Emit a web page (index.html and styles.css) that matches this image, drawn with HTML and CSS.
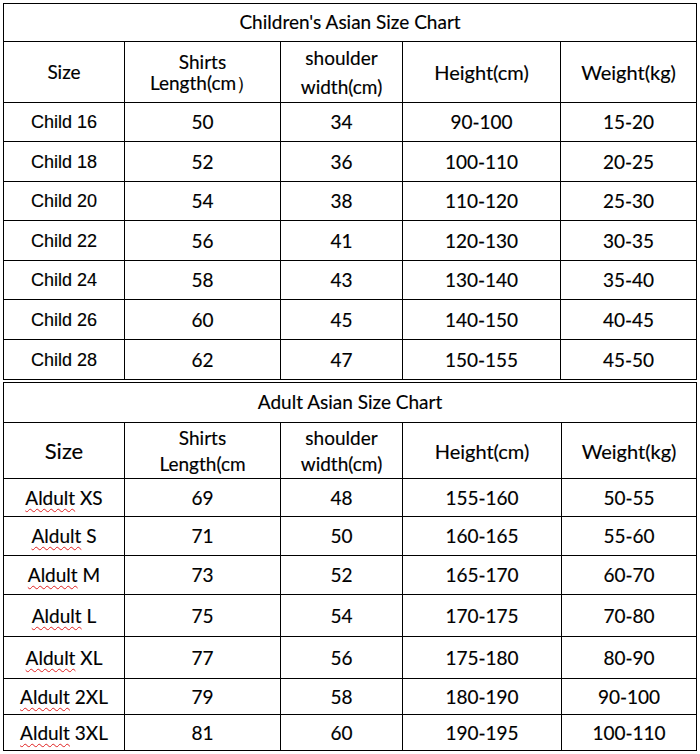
FILE: index.html
```html
<!DOCTYPE html>
<html lang="en">
<head>
<meta charset="utf-8">
<title>Asian Size Chart</title>
<link rel="stylesheet" href="styles.css">
</head>
<body>
<div class="page">
  <table class="chart kids">
    <colgroup>
      <col class="c1"><col class="c2"><col class="c3"><col class="c4"><col class="c5">
    </colgroup>
    <tr class="r-title"><td colspan="5" class="title">Children's Asian Size Chart</td></tr>
    <tr class="r-head">
      <td class="size-h">Size</td>
      <td class="two l21">Shirts<br>Length(cm）</td>
      <td class="two l29">shoulder<br>width(cm)</td>
      <td class="head">Height(cm)</td>
      <td class="head">Weight(kg)</td>
    </tr>
    <tr class="r-a"><td class="child">Child 16</td><td>50</td><td>34</td><td>90-100</td><td>15-20</td></tr>
    <tr class="r-b"><td class="child">Child 18</td><td>52</td><td>36</td><td>100-110</td><td>20-25</td></tr>
    <tr class="r-a"><td class="child">Child 20</td><td>54</td><td>38</td><td>110-120</td><td>25-30</td></tr>
    <tr class="r-b"><td class="child">Child 22</td><td>56</td><td>41</td><td>120-130</td><td>30-35</td></tr>
    <tr class="r-a"><td class="child">Child 24</td><td>58</td><td>43</td><td>130-140</td><td>35-40</td></tr>
    <tr class="r-b"><td class="child">Child 26</td><td>60</td><td>45</td><td>140-150</td><td>40-45</td></tr>
    <tr class="r-b"><td class="child">Child 28</td><td>62</td><td>47</td><td>150-155</td><td>45-50</td></tr>
  </table>
  <table class="chart adult">
    <colgroup>
      <col class="c1"><col class="c2"><col class="c3"><col class="c4b"><col class="c5b">
    </colgroup>
    <tr class="r-title2"><td colspan="5" class="title">Adult Asian Size Chart</td></tr>
    <tr class="r-head2">
      <td class="size-big">Size</td>
      <td class="two l26">Shirts<br>Length(cm</td>
      <td class="two l26">shoulder<br>width(cm)</td>
      <td class="head">Height(cm)</td>
      <td class="head">Weight(kg)</td>
    </tr>
    <tr class="h38"><td><span class="typo">Aldult</span> XS</td><td>69</td><td>48</td><td>155-160</td><td>50-55</td></tr>
    <tr class="h39"><td><span class="typo">Aldult</span> S</td><td>71</td><td>50</td><td>160-165</td><td>55-60</td></tr>
    <tr class="h39"><td><span class="typo">Aldult</span> M</td><td>73</td><td>52</td><td>165-170</td><td>60-70</td></tr>
    <tr class="h42"><td><span class="typo">Aldult</span> L</td><td>75</td><td>54</td><td>170-175</td><td>70-80</td></tr>
    <tr class="h42"><td><span class="typo">Aldult</span> XL</td><td>77</td><td>56</td><td>175-180</td><td>80-90</td></tr>
    <tr class="h36"><td><span class="typo">Aldult</span> 2XL</td><td>79</td><td>58</td><td>180-190</td><td>90-100</td></tr>
    <tr class="h36"><td><span class="typo">Aldult</span> 3XL</td><td>81</td><td>60</td><td>190-195</td><td>100-110</td></tr>
  </table>
</div>
</body>
</html>
```
FILE: styles.css
```css
html, body {
  margin: 0;
  padding: 0;
  background: #ffffff;
}
.page {
  padding: 3px 0 0 3px;
  display: flex;
  flex-direction: column;
  gap: 2px;
  width: 693px;
}
.chart {
  border-collapse: collapse;
  table-layout: fixed;
  width: 693px;
  font-family: Lato, "Open Sans", sans-serif;
  font-size: 19px;
  color: #000;
  -webkit-text-stroke: 0.15px #000;
}
.chart td {
  border: 1px solid #000;
  text-align: center;
  vertical-align: middle;
  padding: 0;
  line-height: 22px;
}
.c1 { width: 121px; }
.c2 { width: 156px; }
.c3 { width: 122px; }
.c4 { width: 158px; }
.c5 { width: 136px; }
.c4b { width: 159px; }
.c5b { width: 135px; }

.r-title { height: 38px; }
.r-head { height: 61px; }
.r-a { height: 39px; }
.r-b { height: 40px; }
.r-title2 { height: 40px; }
.r-head2 { height: 56px; }
.h36 { height: 36px; }
.h38 { height: 38px; }
.h39 { height: 39px; }
.h42 { height: 42px; }

.chart .title { font-size: 19px; padding-bottom: 2px; }
.chart .head { font-size: 20px; }
.chart .two { font-size: 19px; }
.chart .child {
  font-family: "Liberation Sans", Arial, sans-serif;
  font-size: 18px;
}
.chart .l21 { line-height: 21px; }
.chart .l26 { line-height: 26px; }
.chart .l29 { line-height: 29px; }
.chart .size-big { font-size: 22px; }
.typo {
  text-decoration: underline wavy #e02020;
  text-decoration-thickness: 1px;
  text-underline-offset: 3px;
}
```
